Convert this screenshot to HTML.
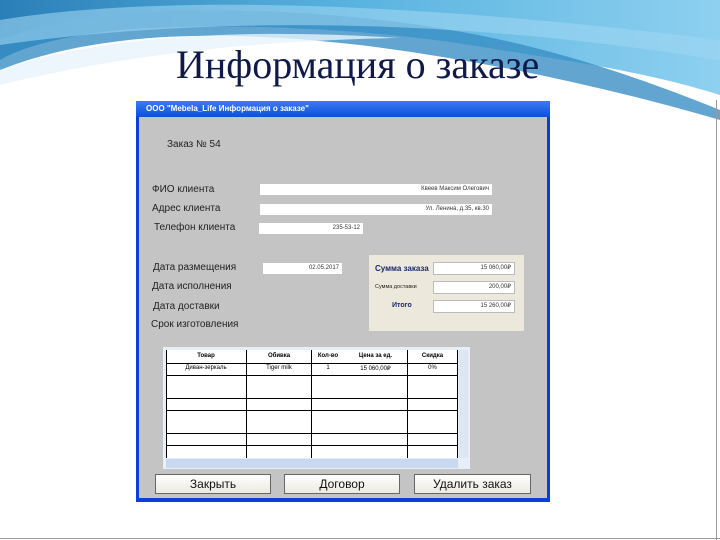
<!DOCTYPE html><html><head><meta charset="utf-8"><style>
*{margin:0;padding:0;box-sizing:border-box}
body{width:720px;height:540px;position:relative;overflow:hidden;background:#fff;font-family:"Liberation Sans",sans-serif}
.a{position:absolute}
.t{font-size:10px;color:#222;white-space:nowrap}
.f{position:absolute;background:#fff;font-size:6px;text-align:right;padding-right:3px;line-height:11px;color:#333;white-space:nowrap}
.b{position:absolute;background:linear-gradient(#fff,#ece9e0);border:1px solid #666;font-size:12px;text-align:center;line-height:18px;color:#111}
.c{position:absolute;background:#000}
</style></head><body>
<svg class="a" style="left:0;top:0" width="720" height="120">
<defs><linearGradient id="g" x1="0" x2="1"><stop offset="0" stop-color="#2a7fb8"/><stop offset=".5" stop-color="#5ab4e0"/><stop offset="1" stop-color="#8ed0f0"/></linearGradient></defs>
<path d="M0 0H720V95C640 70 560 60 470 45C360 28 220 22 120 30C60 36 20 48 0 60Z" fill="url(#g)"/>
<path d="M0 40C80 10 200 5 330 15C450 25 560 45 720 110V120C600 85 480 60 360 45C230 30 100 30 0 70Z" fill="#3a8fc4" opacity=".8"/>
<path d="M0 20C150 -5 400 0 720 40V60C500 25 250 10 0 45Z" fill="#9fd6f2" opacity=".6"/>
<path d="M0 70C100 35 250 28 400 38C260 40 120 55 0 85Z" fill="#e8f4fb" opacity=".8"/>
</svg>
<div class="a" style="left:176px;top:41px;font:40px 'Liberation Serif',serif;color:#101a4a;white-space:nowrap">Информация о заказе</div>
<div class="a" style="left:716px;top:100px;width:1px;height:440px;background:#999"></div>
<div class="a" style="left:0;top:538px;width:720px;height:1px;background:#999"></div>

<div class="a" style="left:136px;top:101px;width:414px;height:401px;background:#0a3fd8"></div>
<div class="a" style="left:136px;top:101px;width:414px;height:16px;background:linear-gradient(#3d7cf0,#0a4fe0);color:#fff;font-size:8px;font-weight:bold;line-height:16px;padding-left:10px">ООО "Mebela_Life Информация о заказе"</div>
<div class="a" style="left:139px;top:117px;width:408px;height:381px;background:#c4c4c4"></div>
<div class="t a" style="left:167px;top:139px">Заказ № 54</div>
<div class="t a" style="left:152px;top:184px">ФИО клиента</div>
<div class="t a" style="left:152px;top:203px">Адрес клиента</div>
<div class="t a" style="left:154px;top:222px">Телефон клиента</div>
<div class="t a" style="left:153px;top:262px">Дата размещения</div>
<div class="t a" style="left:152px;top:281px">Дата исполнения</div>
<div class="t a" style="left:153px;top:301px">Дата доставки</div>
<div class="t a" style="left:151px;top:319px">Срок изготовления</div>
<div class="f" style="left:260px;top:184px;width:232px">Квеев Максим Олегович</div>
<div class="f" style="left:260px;top:204px;width:232px">Ул. Ленина, д.35, кв.30</div>
<div class="f" style="left:259px;top:223px;width:104px">235-53-12</div>
<div class="f" style="left:263px;top:263px;width:79px">02.05.2017</div>
<div class="f" style="left:263px;top:283px;width:79px"></div>
<div class="f" style="left:263px;top:301px;width:79px"></div>
<div class="f" style="left:263px;top:320px;width:79px"></div>
<div class="a" style="left:369px;top:255px;width:155px;height:76px;background:#ece9dc"></div>
<div class="a" style="left:375px;top:264px;font-size:8px;font-weight:bold;color:#1a2a6a">Сумма заказа</div>
<div class="a" style="left:375px;top:284px;font-size:5.5px;color:#222">Сумма доставки</div>
<div class="a" style="left:392px;top:302px;font-size:7px;font-weight:bold;color:#1a2a6a">Итого</div>
<div class="f" style="left:433px;top:262px;width:82px;border:1px solid #bbb">15 060,00&#8381;</div>
<div class="f" style="left:433px;top:281px;width:82px;border:1px solid #bbb">200,00&#8381;</div>
<div class="f" style="left:433px;top:300px;width:82px;border:1px solid #bbb">15 260,00&#8381;</div>

<div class="a" style="left:163px;top:347px;width:307px;height:122px;background:#e6eef8"></div>
<div class="a" style="left:166px;top:350px;width:292px;height:108px;background:#fff"></div>
<div class="c" style="left:166px;top:363px;width:292px;height:1px"></div>
<div class="c" style="left:166px;top:375px;width:292px;height:1px"></div>
<div class="c" style="left:166px;top:398px;width:292px;height:1px"></div>
<div class="c" style="left:166px;top:410px;width:292px;height:1px"></div>
<div class="c" style="left:166px;top:433px;width:292px;height:1px"></div>
<div class="c" style="left:166px;top:445px;width:292px;height:1px"></div>
<div class="c" style="left:166px;top:350px;width:1px;height:108px"></div>
<div class="c" style="left:246px;top:350px;width:1px;height:108px"></div>
<div class="c" style="left:311px;top:350px;width:1px;height:108px"></div>
<div class="c" style="left:407px;top:350px;width:1px;height:108px"></div>
<div class="c" style="left:457px;top:350px;width:1px;height:108px"></div>
<div class="a" style="left:166px;top:353px;width:80px;text-align:center;font-size:6px;font-weight:bold">Товар</div>
<div class="a" style="left:247px;top:353px;width:64px;text-align:center;font-size:6px;font-weight:bold">Обивка</div>
<div class="a" style="left:312px;top:353px;width:32px;text-align:center;font-size:6px;font-weight:bold">Кол-во</div>
<div class="a" style="left:344px;top:353px;width:63px;text-align:center;font-size:6px;font-weight:bold">Цена за ед.</div>
<div class="a" style="left:408px;top:353px;width:49px;text-align:center;font-size:6px;font-weight:bold">Скидка</div>
<div class="a" style="left:166px;top:365px;width:80px;text-align:center;font-size:6px">Диван-зеркаль</div>
<div class="a" style="left:247px;top:365px;width:64px;text-align:center;font-size:6px">Tiger milk</div>
<div class="a" style="left:312px;top:365px;width:32px;text-align:center;font-size:6px">1</div>
<div class="a" style="left:344px;top:365px;width:63px;text-align:center;font-size:6px">15 060,00&#8381;</div>
<div class="a" style="left:408px;top:365px;width:49px;text-align:center;font-size:6px">0%</div>
<div class="a" style="left:459px;top:350px;width:9px;height:108px;background:#dce6f4"></div>
<div class="a" style="left:166px;top:459px;width:292px;height:9px;background:#c8d8f0"></div>

<div class="b" style="left:155px;top:474px;width:116px;height:20px">Закрыть</div>
<div class="b" style="left:284px;top:474px;width:116px;height:20px">Договор</div>
<div class="b" style="left:414px;top:474px;width:117px;height:20px">Удалить заказ</div>
</body></html>
